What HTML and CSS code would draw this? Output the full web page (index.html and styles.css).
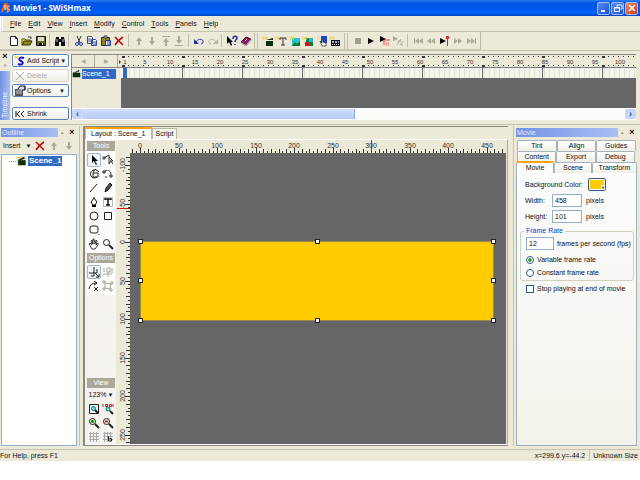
FILE: index.html
```html
<!DOCTYPE html>
<html lang="en">
<head>
<meta charset="utf-8">
<title>Movie1 - SWiSHmax</title>
<link rel="stylesheet" href="styles.css">
</head>
<body>
<div class="app">
  <header class="titlebar">
    <svg class="logo" viewBox="0 0 12 12"><path d="M1 10 4 1h3l1 4-2 1-1-2-2 6z" fill="#f60"/><path d="M6 3c4-1 5 2 2 3 3 0 3 4-2 5 2-2 1-3 0-4z" fill="#ff8a3c"/><path d="M5 3v5" stroke="#fff"/></svg>
    <h1>Movie1 - SWiSHmax</h1>
    <div class="winbtns">
      <button aria-label="Minimize"><svg viewBox="0 0 12 12"><path d="M3 9h4" stroke="#fff" stroke-width="2"/></svg></button>
      <button aria-label="Restore"><svg viewBox="0 0 12 12" fill="none" stroke="#fff"><path d="M5 4.500V3h5v4H8.500M2.500 5.500h5v4h-5zM2.500 6h5"/></svg></button>
      <button class="close" aria-label="Close"><svg viewBox="0 0 12 12"><path d="m3 3 6 6m0-6-6 6" stroke="#fff" stroke-width="1.500"/></svg></button>
    </div>
  </header>

  <nav class="menubar">
    <button><u>F</u>ile</button><button><u>E</u>dit</button><button><u>V</u>iew</button><button><u>I</u>nsert</button><button><u>M</u>odify</button><button><u>C</u>ontrol</button><button><u>T</u>ools</button><button><u>P</u>anels</button><button><u>H</u>elp</button>
  </nav>

  <div class="toolbar">
    <div class="tools g3">
      <button aria-label="New"><svg viewBox="0 0 12 12"><path d="M2.500 1.500h5l2 2v7h-7z" fill="#fff" stroke="#222"/><path d="M7.500 1.500v2h2" fill="none" stroke="#222"/></svg></button>
      <button aria-label="Open"><svg viewBox="0 0 12 12"><path d="M1 10V4h3l1 1h4v2" fill="#ffe97a" stroke="#4a4a00"/><path d="m1 10 2-4h8l-2 4z" fill="#8c8c1c" stroke="#333300"/><path d="M7 2h3v2" fill="none" stroke="#333"/></svg></button>
      <button aria-label="Save"><svg viewBox="0 0 12 12"><path d="M1.500 1.500h9v9h-9z" fill="#66661c" stroke="#111"/><path d="M3 2h6v4H3z" fill="#ddd"/><path d="M4 8h5v3H4z" fill="#111"/><path d="M7 8h1v2H7z" fill="#fff"/></svg></button>
    </div>
    <i class="sep"></i>
    <div class="tools"><button aria-label="Find"><svg viewBox="0 0 12 12"><path d="M2 2h3v2h2V2h3l1 5v4H7V7H5v4H1V7z" fill="#111"/><path d="M3 4v3M9 4v3" stroke="#bbb"/></svg></button></div>
    <i class="sep"></i>
    <div class="tools g4">
      <button aria-label="Cut"><svg viewBox="0 0 12 12" fill="none"><path d="m4 1 3 7m1-7L5 8" stroke="#334"/><circle cx="4" cy="9" r="1.500" stroke="#2238aa"/><circle cx="8" cy="9" r="1.500" stroke="#2238aa"/></svg></button>
      <button aria-label="Copy"><svg viewBox="0 0 12 12" fill="#fff" stroke="#334a8c"><path d="M1.500 1.500h4l1 1v6h-5zM5.500 4.500h4l1 1v5h-5z"/><path d="M2 4h3M2 6h3M7 7h3M7 9h3"/></svg></button>
      <button aria-label="Paste"><svg viewBox="0 0 12 12"><path d="M1.500 2.500h8v8h-8z" fill="#8a8420" stroke="#333"/><path d="M4 1h3v2H4z" fill="#eee" stroke="#333"/><path d="M5.500 5.500h5v5h-5z" fill="#fff" stroke="#223a99"/><path d="M7 7h3M7 9h3" stroke="#223a99"/></svg></button>
      <button aria-label="Delete"><svg viewBox="0 0 12 12"><path d="M2 2q3 3 8 8M10 2Q5 5 2 10" fill="none" stroke="#b80c0c" stroke-width="1.500"/></svg></button>
    </div>
    <i class="sep"></i>
    <div class="tools g4 off">
      <button disabled aria-label="Move up"><svg viewBox="0 0 12 12"><path d="M5 10V6H3l3-4 3 4H7v4z"/></svg></button>
      <button disabled aria-label="Move down"><svg viewBox="0 0 12 12"><path d="M5 2v4H3l3 4 3-4H7V2z"/></svg></button>
      <button disabled aria-label="Bring to front"><svg viewBox="0 0 12 12"><path d="M2 1h8v1H2zM5 11V7H3l3-4 3 4H7v4z"/></svg></button>
      <button disabled aria-label="Send to back"><svg viewBox="0 0 12 12"><path d="M2 10h8v1H2zM5 1v4H3l3 4 3-4H7V1z"/></svg></button>
    </div>
    <i class="sep"></i>
    <div class="tools g2">
      <button aria-label="Undo"><svg viewBox="0 0 12 12"><path d="M3 7c2-4 8-3 7 0q0 2-2 2" fill="none" stroke="#2233a8"/><path d="M1 4v5h5z" fill="#2233a8"/></svg></button>
      <button disabled aria-label="Redo"><svg viewBox="0 0 12 12"><path d="M9 7C7 3 1 4 2 7q0 2 2 2" fill="none" stroke="#b5b2a2"/><path d="M11 4v5H6z" fill="#b5b2a2"/></svg></button>
    </div>
    <i class="sep"></i>
    <div class="tools g2">
      <button aria-label="Context help"><svg viewBox="0 0 12 12"><path d="M1 1v8l2-2 2 4 1-1-1-3h2z"/><path d="M7 4c0-4 4-3 4-1 0 2-2 1-2 4M9 9v1" fill="none" stroke="#1c2ca8" stroke-width="1.500"/></svg></button>
      <button aria-label="Help book"><svg viewBox="0 0 12 12"><path d="m1 7 5-5 5 2-5 6z" fill="#8c1478" stroke="#4a0a3c"/><path d="m1 7 5 3 5-6v2l-5 5-5-3z" fill="#eee" stroke="#666" stroke-width=".5"/><path d="m5 6 2-2" stroke="#ffd83a"/></svg></button>
    </div>
    <i class="grip"></i>
    <div class="tools g6">
      <button aria-label="Insert scene"><svg viewBox="0 0 12 12"><path d="M1 1l4 4M5 1 1 5M0 3h6" stroke="#e6d23c" stroke-width=".7"/><path d="M4 6h7v5H4z" fill="#0a2f0a"/><path d="m4 5 7-2v2z" fill="#222"/></svg></button>
      <button aria-label="Insert text"><svg viewBox="0 0 12 12"><path d="M1 1l4 4M5 1 1 5M0 3h6" stroke="#e6d23c" stroke-width=".7"/><path d="M5 5V3h6v2M8 3v7M6 10h4" fill="none" stroke="#333"/></svg></button>
      <button aria-label="Insert image"><svg viewBox="0 0 12 12"><path d="M3 3h8v8H3z" fill="#25c4c9"/><path d="m3 11 3-4 2 2 3-3v5z" fill="#0b7a2c"/><path d="M1 1l4 4M5 1 1 5M0 3h6" stroke="#e6d23c" stroke-width=".7"/></svg></button>
      <button aria-label="Insert content"><svg viewBox="0 0 12 12"><path d="M4 3h7v8H4z" fill="#0b7a4c"/><path d="M7 3h4v4H7z" fill="#2cb7c9"/><path d="M3 7h4v4H3z" fill="#d81818"/><path d="M1 1l4 4M5 1 1 5M0 3h6" stroke="#e6d23c" stroke-width=".7"/></svg></button>
      <button aria-label="Insert button"><svg viewBox="0 0 12 12"><path d="M5 1h6v7H5z" fill="#1c46d8"/><path d="M4 6 6 8V4h1v3l3 1v3H6z" fill="#fff" stroke="#222" stroke-width=".7"/><path d="M1 1l3 3M4 1 1 4" stroke="#e6d23c" stroke-width=".7"/></svg></button>
      <button aria-label="Insert sprite"><svg viewBox="0 0 12 12"><path d="M2 5h9v6H2z" fill="#111"/><path d="M3 6h2v2H3zm3 0h2v2H6zm3 0h1v2H9z" fill="#9ad"/><path d="M3 9.500h8" stroke="#fff" stroke-dasharray="1"/><path d="M1 1l4 4M5 1 1 5M0 3h6" stroke="#e6d23c" stroke-width=".7"/></svg></button>
    </div>
    <i class="grip"></i>
    <div class="tools g4">
      <button disabled aria-label="Stop"><svg viewBox="0 0 12 12"><path d="M3 3h6v6H3z" fill="#a19e90"/></svg></button>
      <button aria-label="Play movie"><svg viewBox="0 0 12 12"><path d="m3 3 6 3-6 3z"/></svg></button>
      <button aria-label="Play timeline"><svg viewBox="0 0 12 12"><path d="m1 1 6 3-6 3z"/><path d="M5 5v5M6 5h5M7 8h1m1 0h1M7 10h1m1 0h1" stroke="#e33"/></svg></button>
      <button disabled aria-label="Play effect"><svg viewBox="0 0 12 12"><path d="m1 1 5 3-5 2z" fill="#aaa798"/><path d="m5 10 4-6m0 6h2M6 6h3m-1 4 3-4" stroke="#aaa798"/></svg></button>
    </div>
    <i class="sep"></i>
    <div class="tools g5 off">
      <button disabled aria-label="First frame"><svg viewBox="0 0 12 12"><path d="M2 3h1v6H2zM7 3v6L3 6zM11 3v6L7 6z"/></svg></button>
      <button disabled aria-label="Step back"><svg viewBox="0 0 12 12"><path d="M6 3v6L2 6zM10 3v6L6 6z"/></svg></button>
      <button aria-label="Play from frame"><svg viewBox="0 0 12 12"><path d="m1 3 6 3-6 3z" fill="#000"/><path d="M7 1h3v3H7zM8 4h1v7H8z" fill="#e22"/></svg></button>
      <button disabled aria-label="Step forward"><svg viewBox="0 0 12 12"><path d="M2 3v6l4-3zM6 3v6l4-3z"/></svg></button>
      <button disabled aria-label="Last frame"><svg viewBox="0 0 12 12"><path d="M1 3v6l4-3zM5 3v6l4-3zM9 3h1v6H9z"/></svg></button>
    </div>
  </div>

  <section class="timeline">
    <div class="dock">
      <button aria-label="Close timeline">×</button>
      <span class="dockarrow">▸</span>
      <span class="docktab">Timeline</span>
    </div>
    <div class="actions">
      <button><svg viewBox="0 0 12 12"><path d="M1 1l3 3M4 1 1 4M0 2h5" stroke="#e6c800" stroke-width=".7"/><path d="M10 3C5 1 4 5 7 6s2 5-3 3" fill="none" stroke="#1212cc" stroke-width="2"/></svg>Add Script<b>▼</b></button>
      <button disabled><svg viewBox="0 0 12 12"><path d="m2 2 8 8m0-8-8 8" stroke="#aaa"/></svg>Delete</button>
      <button><svg viewBox="0 0 12 12"><path d="M1 4h8v7H1z" fill="#555"/><path d="M2 6h6M2 8h6" stroke="#ccc"/><path d="M4 4 6 1h5v4H8" fill="#ddd" stroke="#111"/><path d="M11 1v4" stroke="#22c"/></svg>Options<b>▼</b></button>
      <button class="shrink"><svg viewBox="0 0 12 12" fill="none" stroke="#111"><path d="M2 3v6M6 3 3 6l3 3M10 3 7 6l3 3"/></svg>Shrink</button>
    </div>
    <div class="tracks">
      <div class="tracknav"><button disabled aria-label="Previous">◀</button><button disabled aria-label="Next">▶</button></div>
      <div class="track"><svg viewBox="0 0 12 12"><path d="M1 5h10v6H1z" fill="#0a2f0a"/><path d="m1 5 8-4 1 2-5 2z" fill="#222"/><path d="m3 4 2-1m1 0 2-1" stroke="#fff"/></svg><span>Scene_1</span></div>
    </div>
    <div class="frames">
      <svg class="frameruler" id="frames"></svg>
      <svg class="framerow">
        <defs><pattern id="cell" x="2" width="5" height="12" patternUnits="userSpaceOnUse"><path d="M4 0h1v12H4z" fill="#e4e2d4"/></pattern>
        <pattern id="second" x="5" width="60" height="12" patternUnits="userSpaceOnUse"><path d="M59 0h1v12h-1z" fill="#666"/></pattern></defs>
        <rect width="100%" height="12" fill="#f6f5ec"/><rect width="100%" height="12" fill="url(#cell)"/><rect x="5" width="100%" height="12" fill="url(#second)"/>
        <rect x="4" width="5" height="12" fill="#316ac5"/><path d="M4 0h1v12H4z" fill="#fff"/>
      </svg>
      <div class="void"></div>
      <div class="scroll"><button aria-label="Scroll left">‹</button><div class="thumb"></div><button aria-label="Scroll right">›</button></div>
    </div>
  </section>

  <main class="work">
    <aside class="outline">
      <div class="panelhead"><h2>Outline</h2><span>▴</span><button aria-label="Close outline">×</button></div>
      <div class="outlinebar">
        <button class="insert">Insert <b>▼</b></button>
        <button aria-label="Delete object"><svg viewBox="0 0 12 12"><path d="M2 2q3 3 8 8M10 2Q5 5 2 10" fill="none" stroke="#b80c0c" stroke-width="1.500"/></svg></button>
        <button disabled aria-label="Object up"><svg viewBox="0 0 12 12" fill="#aaa797"><path d="M5 10V6H3l3-4 3 4H7v4z"/></svg></button>
        <button disabled aria-label="Object down"><svg viewBox="0 0 12 12" fill="#aaa797"><path d="M5 2v4H3l3 4 3-4H7V2z"/></svg></button>
      </div>
      <div class="tree"><div class="node"><i></i><svg viewBox="0 0 12 12"><path d="M0 0h12v12H0z" fill="#e4e2d4"/><path d="M2 5h9v6H2z" fill="#0a2f0a"/><path d="m1 5 8-4 1 2-5 2z" fill="#222"/><path d="M1 2h4" stroke="#e6c800"/></svg><span>Scene_1</span></div></div>
    </aside>

    <section class="layout">
      <div class="doctabs"><button class="on">Layout : Scene_1</button><button>Script</button></div>
      <div class="editor">
        <div class="toolbox">
          <h3>Tools</h3>
          <div class="grid">
            <button class="on" aria-label="Select"><svg viewBox="0 0 12 12"><path d="M4 1v8l2-2 2 4 1-1-2-3h3z"/></svg></button>
            <button aria-label="Subselect"><svg viewBox="0 0 12 12" fill="none" stroke="#333"><path d="m2 4 5-3M7 1v9l2-3 2 3M7 3l4 4H8M1 3h2v2H1z"/></svg></button>
            <button aria-label="Fill transform"><svg viewBox="0 0 12 12" fill="none" stroke="#222"><path d="M6 2a4 4 0 1 0 3 7M5 5h5v4H5zM5 5l2-4 4 3"/></svg></button>
            <button aria-label="Motion path"><svg viewBox="0 0 12 12" fill="none" stroke="#222"><path d="M3 3q6-2 6 4" stroke-dasharray="2 1"/><path d="M1 3h2v2H1zM8 7h2v2H8zM3 9h2"/></svg></button>
            <button aria-label="Line"><svg viewBox="0 0 12 12"><path d="m2 10 7-8" stroke="#222"/></svg></button>
            <button aria-label="Pencil"><svg viewBox="0 0 12 12"><path d="m3 10 1-4 4-5 2 2-4 5z" fill="#555" stroke="#111"/></svg></button>
            <button aria-label="Pen"><svg viewBox="0 0 12 12"><path d="M6 1v4" stroke="#111"/><path d="M6 2 3 6l2 3h2l2-3z" fill="#fff" stroke="#111"/><path d="M4 9h4v2H4z"/></svg></button>
            <button aria-label="Text"><svg viewBox="0 0 12 12" fill="none"><path d="M1.500 1.500h9v9h-9z" stroke="#777" stroke-dasharray="1"/><path d="M3 4V3h6v1M6 3v6M4 9h4" stroke="#111" stroke-width="1.500"/></svg></button>
            <button aria-label="Ellipse"><svg viewBox="0 0 12 12"><circle cx="6" cy="6" r="4" fill="none" stroke="#222"/></svg></button>
            <button aria-label="Rectangle"><svg viewBox="0 0 12 12"><path d="M2.500 2.500h7v7h-7z" fill="none" stroke="#222"/></svg></button>
            <button aria-label="Autoshape"><svg viewBox="0 0 12 12"><rect x="2" y="2" width="8" height="7" rx="2" fill="none" stroke="#222"/><path d="M10 10h2v1h-2z" fill="#996"/></svg></button><i></i>
            <button aria-label="Pan"><svg viewBox="0 0 12 12"><path d="M4 11 1 6l1-1 2 2-1-4 1-1 1 4V1h1l1 5 1-4 1 1-1 4 2-2v2l-3 4z" fill="#fff" stroke="#111" stroke-width=".8"/></svg></button>
            <button aria-label="Zoom"><svg viewBox="0 0 12 12" fill="none" stroke="#222"><circle cx="4.500" cy="4.500" r="3"/><path d="m7 7 4 4" stroke-width="2"/></svg></button>
          </div>
          <h3>Options</h3>
          <div class="grid">
            <button class="on" aria-label="Scale"><svg viewBox="0 0 12 12" fill="none" stroke="#222"><path d="M1 7h8V3M6 1v9H3M7 7l4 4M11 8v3H8"/></svg></button>
            <button disabled aria-label="Snap"><svg viewBox="0 0 12 12" fill="none" stroke="#aaa797"><path d="M2 2v4M5 2h3v4H5zM10 2v5M1 8h9M6 6v5"/></svg></button>
            <button aria-label="Bend"><svg viewBox="0 0 12 12" fill="none" stroke="#222"><path d="M1 9q1-6 7-6M6 1l3 2-3 2M6 7l4 4m0-4-4 4"/></svg></button>
            <button disabled aria-label="Distort"><svg viewBox="0 0 12 12" fill="none" stroke="#aaa797"><path d="m3 3 6 1-1 5-5-1zM1 1h2v2H1zM9 2h2v2H9zM8 9h2v2H8zM1 8h2v2H1z"/></svg></button>
          </div>
          <div class="grow"></div>
          <h3>View</h3>
          <button class="zoomlevel">123%<b>▼</b></button>
          <div class="grid view">
            <button aria-label="Fit scene"><svg viewBox="0 0 12 12" fill="none" stroke="#222"><path d="M1.500 1.500h9v9h-9z"/><circle cx="5.500" cy="5.500" r="2" fill="#7dd" stroke="#177"/><path d="m7 7 3 3" stroke-width="2"/></svg></button>
            <button aria-label="View at 100%"><svg viewBox="0 0 12 12" fill="none"><path d="M1 1v3M3.500 1.500h2v2h-2zM7.500 1.500h2v2h-2zM11 1v3" stroke="#b22"/><circle cx="6" cy="6" r="2" fill="#7dd" stroke="#177"/><path d="m8 8 3 3" stroke="#222" stroke-width="2"/></svg></button>
            <button aria-label="Zoom in"><svg viewBox="0 0 12 12" fill="none" stroke="#222"><circle cx="4.500" cy="4.500" r="3" fill="#dfd"/><path d="m7 7 4 4" stroke-width="2"/><path d="M3 4.500h3M4.500 3v3" stroke="#080" stroke-width="1.500"/></svg></button>
            <button aria-label="Zoom out"><svg viewBox="0 0 12 12" fill="none" stroke="#222"><circle cx="4.500" cy="4.500" r="3" fill="#fdd"/><path d="m7 7 4 4" stroke-width="2"/><path d="M3 4.500h3" stroke="#b00" stroke-width="1.500"/></svg></button>
            <button aria-label="Show grid"><svg viewBox="0 0 12 12"><path d="M2.500 1v10M5.500 1v10M8.500 1v10M1 2.500h10M1 5.500h10M1 8.500h10" stroke="#aaa"/></svg></button>
            <button aria-label="Snap to grid"><svg viewBox="0 0 12 12"><path d="M2.500 1v10M5.500 1v10M8.500 1v10M1 2.500h10M1 5.500h10M1 8.500h10" stroke="#aaa"/><path d="M6.500 5v5h3V7.500h-2" fill="none" stroke="#222"/></svg></button>
          </div>
        </div>
        <div class="stagegrid">
          <svg class="hruler" id="hruler"></svg>
          <svg class="vruler" id="vruler"></svg>
          <div class="canvas"><div class="movie"><i></i><i></i><i></i><i></i><i></i><i></i><i></i><i></i></div></div>
        </div>
      </div>
    </section>

    <aside class="props">
      <div class="panelhead"><h2>Movie</h2><span>▴</span><button aria-label="Close movie panel">×</button></div>
      <div class="tabs">
        <div><button>Tint</button><button>Align</button><button>Guides</button></div>
        <div><button>Content</button><button>Export</button><button>Debug</button></div>
        <div><button class="on">Movie</button><button>Scene</button><button>Transform</button></div>
      </div>
      <form class="sheet">
        <div class="row color"><label for="bg">Background Color:</label><button type="button" id="bg" class="swatch" aria-label="Background Color"><b>▼</b></button></div>
        <div class="row"><label for="w">Width:</label><input id="w" value="458"><span>pixels</span></div>
        <div class="row"><label for="h">Height:</label><input id="h" value="101"><span>pixels</span></div>
        <fieldset>
          <legend>Frame Rate</legend>
          <div class="fps"><input id="fps" value="12"><label for="fps">frames per second (fps)</label></div>
          <label class="opt"><input type="radio" name="rate" checked>Variable frame rate</label>
          <label class="opt"><input type="radio" name="rate">Constant frame rate</label>
        </fieldset>
        <label class="opt stop"><input type="checkbox">Stop playing at end of movie</label>
      </form>
    </aside>
  </main>

  <footer class="status"><span>For Help, press F1</span><span>x=299.6 y=-44.2</span><span>Unknown Size</span></footer>
</div>
<script src="rulers.js"></script>
</body>
</html>
```
FILE: rulers.js
```js
const NS = 'http://www.w3.org/2000/svg';

function add(svg, name, attrs, text) {
  const el = document.createElementNS(NS, name);
  for (const key in attrs) el.setAttribute(key, attrs[key]);
  if (text !== undefined) el.textContent = text;
  svg.appendChild(el);
}

// Stage rulers: 123% zoom, a tick every 5 units and a label every 50.
const SCALE = 0.77;

function stageRuler(id, origin, vertical, cursor) {
  const svg = document.getElementById(id);
  const box = svg.getBoundingClientRect();
  const end = vertical ? box.height : box.width;
  const depth = 13;
  svg.replaceChildren();
  for (let u = -110; origin + u * SCALE < end - 1; u += 5) {
    const p = Math.round(origin + u * SCALE);
    if (p < 0) continue;
    const len = u % 50 === 0 ? 5 : u % 10 === 0 ? 4 : 2;
    add(svg, 'rect', vertical
      ? { x: depth - len, y: p, width: len, height: 1 }
      : { x: p, y: depth - len, width: 1, height: len });
    if (u % 50 === 0 && p + 8 < end) {
      add(svg, 'text', vertical
        ? { transform: `translate(8 ${p}) rotate(-90)`, 'text-anchor': 'middle' }
        : { x: p, y: 8, 'text-anchor': 'middle' }, u);
    }
  }
  add(svg, 'rect', vertical
    ? { x: 0, y: cursor, width: depth, height: 1, class: 'cursor' }
    : { x: cursor, y: 0, width: 1, height: depth, class: 'cursor' });
}

// Frame ruler: five pixels for each frame, a heavier mark each second.
function frameRuler() {
  const svg = document.getElementById('frames');
  const end = svg.getBoundingClientRect().width;
  svg.replaceChildren();
  for (let f = 1; 2 + f * 5 < end; f++) {
    const x = 2 + f * 5;
    const second = (f - 1) % 12 === 0;
    for (const y of [1, 10]) {
      add(svg, 'rect', { x: x - (second ? 3 : 2), y, width: second ? 3 : 1, height: second ? 2 : 1 });
    }
    if ((f === 1 || f % 5 === 0) && x + 6 < end) add(svg, 'text', { x, y: 9, 'text-anchor': 'middle' }, f);
  }
  add(svg, 'path', { d: 'M1 5v4l2-2z' });
}

function draw() {
  stageRuler('hruler', 11, false, 242);
  stageRuler('vruler', 89, true, 55);
  frameRuler();
}

draw();
addEventListener('resize', draw);
```
FILE: styles.css
```css
* { box-sizing: border-box; }
body { margin: 0; background: #fff; font: 7px/10px "Liberation Sans", sans-serif; color: #111; }
h1, h2, h3, fieldset, form { margin: 0; padding: 0; }
button, input { font: inherit; color: inherit; margin: 0; padding: 0; border: 0; background: none; }
button { display: flex; align-items: center; justify-content: center; white-space: nowrap; }
svg { display: block; flex: none; width: 12px; height: 12px; }
b { font-size: 6px; }

.app { display: flex; flex-direction: column; height: calc(100vh - 19px); background: #ece9d8; overflow: hidden; }

.titlebar { display: flex; align-items: center; height: 16px; gap: 1px; flex: none; color: #fff; background: linear-gradient(#2a7cf0, #0054e3 20%, #0058f0 60%, #0067ff 80%, #0040b8); }
.titlebar h1 { font: bold 8px/14px "Noto Sans", sans-serif; flex: 1; }
.winbtns { display: flex; gap: 1px; padding-right: 2px; }
.winbtns button { width: 13px; height: 13px; border: 1px solid #9dbcf5; border-radius: 2px; background: linear-gradient(135deg, #5a8cf5, #1c50d8); }
.winbtns .close { background: linear-gradient(135deg, #f08a6a, #d03c14); }

.menubar { display: flex; gap: 7px; flex: none; height: 16px; border-bottom: 1px solid #c5c2b2; border-left: 3px double #fff; padding-left: 7px; }
.toolbar { display: flex; align-items: center; flex: none; width: 481px; height: 18px; padding-left: 7px; border-right: 1px solid #bbb8a8; border-bottom: 1px solid #cbc8b8; }
.tools { display: flex; justify-content: space-between; }
.tools button { width: 13px; height: 14px; }
.g2 { width: 27px; } .g3 { width: 40px; } .g4 { width: 54px; } .g5 { width: 67px; } .g6 { width: 81px; }
.off { fill: #aaa797; }
.sep { width: 1px; height: 13px; margin: 0 3px 0 2px; background: #c0bdad; }
.grip { width: 4px; height: 16px; margin: 0 3px 0 2px; border: 1px solid #c0bdad; border-width: 0 1px; }

.timeline { display: grid; grid-template-columns: 11px 60px 47px 1fr; flex: none; height: 75px; padding: 3px 4px 4px 0; border-top: 1px solid #c5c2b2; border-bottom: 1px solid #c5c2b2; }
.dock { display: flex; flex-direction: column; align-items: center; padding-right: 1px; }
.dock button { height: 4px; font: bold 9px/4px "Liberation Sans", sans-serif; }
.dockarrow { height: 13px; font-size: 6px; line-height: 14px; color: #aaa; }
.docktab { flex: 1; align-self: stretch; padding-top: 2px; writing-mode: vertical-rl; transform: rotate(180deg); color: #eef3ff; background: linear-gradient(90deg, #a5bcf3, #7394e4); font-size: 7px; line-height: 10px; }
.actions { display: flex; flex-direction: column; gap: 2px; padding: 0 2px 0 1px; background: #f8f8f6; }
.actions button { justify-content: flex-start; height: 13px; gap: 1px; padding-left: 1px; border: 1px solid #5b84b5; border-radius: 2px; background: linear-gradient(#fff, #efeee6); }
.actions button b { margin-left: auto; padding-right: 3px; }
.actions button:disabled { color: #aaa; border-color: #d8d6cc; }
.actions .shrink { margin-top: auto; }
.tracks { border-left: 1px solid #888; border-top: 1px solid #888; background: #ece9d8; }
.tracknav { display: flex; height: 13px; border-bottom: 1px solid #888; }
.tracknav button { flex: 1; font-size: 6px; color: #aaa797; border-right: 1px solid #aaa797; }
.track { display: flex; align-items: center; height: 11px; gap: 1px; color: #fff; }
.track svg { width: 9px; height: 9px; }
.track span { flex: 1; margin-right: 2px; background: #316ac5; }
.frames { display: flex; flex-direction: column; min-width: 0; }
.frameruler { width: 100%; height: 13px; border-top: 1px solid #888; background: #ece9d8; font-size: 6px; fill: #333; }
.framerow { width: 100%; height: 11px; border-top: 1px solid #777; }
.void { flex: 1; margin-left: 3px; background: #666; }
.scroll { display: flex; height: 12px; margin-left: -46px; padding-top: 1px; background: #fcfcfa; }
.scroll button { width: 11px; height: 10px; font: bold 9px/9px "Liberation Sans", sans-serif; color: #234a8c; background: #c5d5fb; border-radius: 2px; }
.thumb { width: 272px; height: 10px; margin-right: auto; background: linear-gradient(#d0defd, #b8cbf8); border-right: 1px solid #8daae8; }

.work { display: grid; grid-template-columns: 80px 1fr 127px; gap: 3px; flex: 1; min-height: 0; padding: 1px 0 3px; }
.outline, .layout, .props { min-width: 0; min-height: 0; display: flex; flex-direction: column; }
.outline { padding: 1px 2px 0 1px; border-right: 1px solid #c5c2b2; }
.panelhead { display: flex; align-items: center; height: 10px; flex: none; }
.panelhead h2 { flex: 1; padding-left: 1px; font: 7px/9px "Liberation Sans", sans-serif; color: #e5edff; background: linear-gradient(90deg, #7393e2, #a9bff5); }
.panelhead span { width: 9px; text-align: center; font-size: 5px; color: #999; }
.panelhead button { width: 10px; font: bold 9px/9px "Liberation Sans", sans-serif; }
.outlinebar { display: flex; justify-content: space-between; height: 17px; flex: none; align-items: center; padding: 0 2px; }
.insert { gap: 5px; }
.tree { flex: 1; padding-top: 1px; border: 1px solid #8fb0d0; background: #fff; }
.node { display: flex; align-items: center; padding-left: 7px; }
.node i { width: 7px; border-top: 1px dotted #999; }
.node svg { width: 11px; height: 10px; }
.node span { margin-left: 1px; padding: 0 1px; font: bold 8px/10px "Liberation Sans", sans-serif; color: #fff; background: #316ac5; }

.layout { border: 1px solid #8a887c; border-width: 1px 0 1px 2px; margin-right: 2px; }
.doctabs { display: flex; align-items: flex-end; height: 12px; flex: none; }
.doctabs button { height: 11px; padding: 0 3px; border: 1px solid #bbb8a8; border-bottom: 0; background: #f4f3ec; }
.doctabs .on { height: 12px; padding: 0 5px; border-top: 2px solid #ffa312; background: #fcfcfa; }
.editor { display: grid; grid-template-columns: 31px 1fr; flex: 1; min-height: 0; gap: 1px; padding-right: 1px; border: 1px solid #fff; border-left: 0; border-right-color: #aaa797; }
.toolbox { display: flex; flex-direction: column; padding: 1px 1px 0 2px; background: #f4f3ee; }
.toolbox h3 { width: 28px; height: 10px; flex: none; font: 7px/10px "Liberation Sans", sans-serif; text-align: center; color: #fff; background: #aca899; }
.toolbox .grid { display: grid; grid-template-columns: 14px 14px; padding: 2px 0; background: #fcfcfa; }
.toolbox .grid button { width: 14px; height: 14px; }
.toolbox .grid .on { border: 1px solid #9db8d8; border-radius: 2px; background: #f0f4fa; }
.toolbox .grid.view { padding: 0; background: none; }
.grow { flex: 1; }
.zoomlevel { height: 14px; gap: 1px; }
.stagegrid { display: grid; grid-template: "h h" 13px "v c" 1fr / 13px 1fr; min-width: 0; background: #ece9d8; }
.hruler { grid-area: h; width: calc(100% - 12px); height: 13px; margin-left: 12px; font-size: 7px; fill: #333; }
.vruler { grid-area: v; width: 13px; height: 100%; font-size: 7px; fill: #333; }
.cursor { fill: #d01414; }
.canvas { grid-area: c; position: relative; background: #666; }
.movie { position: absolute; left: 10px; top: 88px; width: 354px; height: 80px; background: #fc0; border: 1px solid #998a4a; }
.movie i { position: absolute; left: -3px; top: -3px; width: 5px; height: 5px; background: #fff; border: 1px solid #222; }
.movie i:nth-child(2), .movie i:nth-child(7) { left: calc(50% - 2px); }
.movie i:nth-child(3), .movie i:nth-child(5), .movie i:nth-child(8) { left: calc(100% - 2px); }
.movie i:nth-child(4), .movie i:nth-child(5) { top: calc(50% - 3px); }
.movie i:nth-child(n+6) { top: calc(100% - 2px); }

.props { padding: 1px 3px 0 2px; border-left: 1px solid #c5c2b2; }
.tabs { display: flex; flex-direction: column; padding-top: 3px; }
.tabs div { display: flex; padding: 0 1px; }
.tabs div:nth-child(2) { padding-right: 2px; }
.tabs button { flex: 1; height: 11px; border: 1px solid #a8b4bc; border-bottom: 0; border-radius: 2px 2px 0 0; background: linear-gradient(#fff, #efeee6); }
.tabs div:last-child { padding: 0; }
.tabs .on { height: 12px; margin-top: -1px; border-top: 2px solid #ffa312; background: #fcfcfc; }
.tabs div:last-child button:last-child { flex: 1.2; }
.sheet { flex: 1; padding: 5px 2px 0 3px; background: linear-gradient(#fcfcfc, #f3f2ea); border: 1px solid #a0b0bc; border-top: 0; }
.row { display: grid; grid-template-columns: 23px 30px 1fr; gap: 4px; align-items: center; padding: 0 0 3px 5px; }
.row label { white-space: nowrap; }
.row.color { grid-template-columns: 63px 18px; gap: 0; }
.swatch { width: 18px; height: 13px; justify-content: flex-end; align-items: flex-end; border: 1px solid #345a84; border-radius: 2px; background: #fc0; box-shadow: inset 0 0 0 1px #fff; }
.swatch b { font-size: 4px; line-height: 5px; background: #fff; }
.sheet input:not([type]) { width: 30px; height: 13px; padding: 0 2px; border: 1px solid #8fb0d0; background: #fff; }
fieldset { margin: 0; padding: 1px 4px 1px 5px; border: 1px solid #d0d0bf; border-radius: 3px; min-width: 0; }
legend { margin-left: -2px; padding: 0 2px; color: #0046d5; }
.fps { display: flex; align-items: center; gap: 3px; white-space: nowrap; padding-bottom: 3px; }
.sheet .fps input:not([type]) { width: 28px; flex: none; }
.opt { display: flex; align-items: center; gap: 3px; height: 13px; white-space: nowrap; }
.opt input { appearance: none; width: 8px; height: 8px; border: 1px solid #2c5a8c; background: #fff; }
.opt [type=radio] { border-radius: 50%; }
.opt [type=radio]:checked { background: radial-gradient(circle, #21a121 35%, #fff 45%); }
.stop { padding: 2px 0 0 6px; }

.status { display: flex; flex: none; height: 12px; gap: 4px; line-height: 12px; padding-right: 2px; border-top: 1px solid #c5c2b2; }
.status span:first-child { flex: 1; }
.status span:last-child { padding-left: 3px; border-left: 1px solid #c5c2b2; }
```
